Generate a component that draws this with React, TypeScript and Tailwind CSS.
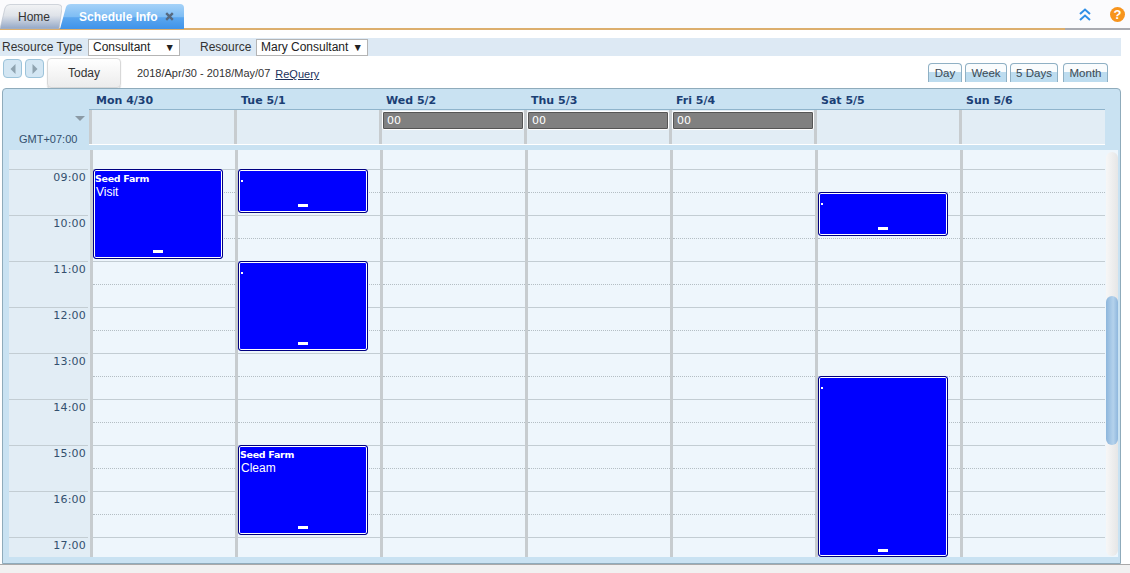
import React from "react";

const arial = "font-['Liberation_Sans',Arial,sans-serif]";
const deja = "font-['DejaVu_Sans',Verdana,sans-serif]";

const days = ["Mon 4/30", "Tue 5/1", "Wed 5/2", "Thu 5/3", "Fri 5/4", "Sat 5/5", "Sun 5/6"];
const hours = ["09:00", "10:00", "11:00", "12:00", "13:00", "14:00", "15:00", "16:00", "17:00"];

type Ev = { top: number; h: number; title?: string; body?: string; handle?: number };
const events: Record<number, Ev[]> = {
  0: [{ top: 19, h: 90, title: "Seed Farm", body: "Visit" }],
  1: [
    { top: 19, h: 44 },
    { top: 111, h: 90 },
    { top: 295, h: 90, title: "Seed Farm", body: "Cleam" },
  ],
  5: [
    { top: 42, h: 44 },
    { top: 226, h: 181, handle: 5 },
  ],
};

function Event({ e }: { e: Ev }) {
  return (
    <div
      className="absolute left-0 w-[130px] rounded-[3px] border border-[#000080] bg-[#0000ff] shadow-[inset_0_0_0_1px_#ffffff]"
      style={{ top: e.top, height: e.h }}
    >
      {e.title ? (
        <div className="pl-[1px] pt-[2px] text-white">
          <div className={`${deja} text-[9.5px] font-bold leading-[13px] tracking-[-0.3px]`}>{e.title}</div>
          <div className={`${arial} pl-[1px] pt-[1px] text-[12px] leading-[13px]`}>{e.body}</div>
        </div>
      ) : (
        <div className="ml-[2px] mt-[10px] h-[2px] w-[2px] bg-white" />
      )}
      <div
        className="absolute left-1/2 h-[3px] w-[10px] -translate-x-1/2 bg-white"
        style={{ bottom: (e.handle ?? 6) - 1 }}
      />
    </div>
  );
}

function Slots() {
  return (
    <>
      <div className="h-[20px] border-b border-[#c3cdd3]" />
      {hours.map((h) => (
        <div key={h} className="h-[46px]">
          <div className="h-[23px] border-b border-dotted border-[#b4bec4]" />
          <div className="h-[23px] border-b border-[#c3cdd3]" />
        </div>
      ))}
    </>
  );
}

function ViewTab({ label, w }: { label: string; w: string }) {
  return (
    <div
      className={`${w} ${arial} h-[19px] rounded-t-[4px] border border-b-0 border-[#8fb0c4] bg-[linear-gradient(#fafcfd_0_8px,#bddcef_8px)] text-center text-[11.5px] leading-[19px] text-[#3c4a54]`}
    >
      {label}
    </div>
  );
}

function Select({ w, label }: { w: string; label: string }) {
  return (
    <div className={`${w} flex h-[17px] items-center justify-between border border-[#b4b4b4] bg-white pl-[4px] pr-[4px] text-[12px] leading-[15px] text-[#222]`}>
      <span>{label}</span>
      <span className="text-[10.5px]">▼</span>
    </div>
  );
}

function NavBtn({ dir }: { dir: "l" | "r" }) {
  return (
    <div className="flex h-[19px] w-[19px] items-center justify-center rounded-[4px] border border-[#9cc3da] bg-[#d3e6f3]">
      <svg width="6" height="10" viewBox="0 0 6 10">
        <path d={dir === "l" ? "M5.5 0V10L0.5 5Z" : "M0.5 0V10L5.5 5Z"} fill="#8fa3b0" />
      </svg>
    </div>
  );
}

export default function App() {
  return (
    <div className={`${arial} flex h-[573px] w-[1130px] flex-col overflow-hidden bg-white`}>
      {/* top tab bar */}
      <div className="flex h-[28px] shrink-0 items-end justify-between bg-[#fbfbfd]">
        <div className="relative z-10 -mb-[1px] flex h-[25px] items-stretch">
          <div className="relative z-0 flex w-[62px] items-center pl-[18px] text-[12px] text-[#333]">
            <svg className="absolute inset-0 -z-10" width="62" height="25" viewBox="0 0 62 25">
              <defs>
                <linearGradient id="h" x1="0" x2="0" y1="0" y2="1">
                  <stop offset="0" stopColor="#f2f3f5" />
                  <stop offset="0.45" stopColor="#dfe3e9" />
                  <stop offset="1" stopColor="#92a6c6" />
                </linearGradient>
              </defs>
              <path d="M0 25 L5 4 Q6 0.5 10 0.5 H58 Q62 0.5 62 4 L59 25Z" fill="url(#h)" stroke="#b5bcc6" strokeWidth="0.6" />
            </svg>
            Home
          </div>
          <div className="relative z-0 -ml-[2px] flex w-[124px] items-center pl-[19px] text-[12px] font-bold text-white">
            <svg className="absolute inset-0 -z-10" width="124" height="25" viewBox="0 0 124 25">
              <defs>
                <linearGradient id="s" x1="0" x2="0" y1="0" y2="1">
                  <stop offset="0" stopColor="#a5d2f8" />
                  <stop offset="0.5" stopColor="#7fbdf4" />
                  <stop offset="0.55" stopColor="#5aa6ef" />
                  <stop offset="1" stopColor="#3f93ea" />
                </linearGradient>
              </defs>
              <path d="M0 25 L6 3 Q7 0 11 0 H120 Q124 0 124 4 V25Z" fill="url(#s)" />
            </svg>
            <span>Schedule Info</span>
            <svg className="ml-[7px]" width="9" height="9" viewBox="0 0 9 9">
              <path d="M1.2 1.2 7.8 7.8M7.8 1.2 1.2 7.8" stroke="#56697f" strokeWidth="2.4" />
            </svg>
          </div>
        </div>
        <div className="flex h-[28px] items-center gap-[19px] pr-[5px]">
          <svg width="12" height="13" viewBox="0 0 12 13" fill="none" stroke="#2f8fe6" strokeWidth="2">
            <path d="M1 6 6 1.5 11 6M1 12 6 7.5 11 12" />
          </svg>
          <div className="flex h-[15px] w-[15px] items-center justify-center rounded-full bg-[#f7941d] text-[13px] font-bold leading-none text-white">
            ?
          </div>
        </div>
      </div>
      <div className="h-[2px] shrink-0 bg-[linear-gradient(90deg,#dcae6d_1065px,#a9aab0_1065px)]" />

      {/* filter bar */}
      <div className="mt-[8px] flex h-[18px] w-[1121px] shrink-0 items-center bg-[#dde9f4] pl-[2px] text-[12px] text-[#333]">
        <span className="w-[86px]">Resource Type</span>
        <Select w="w-[92px]" label="Consultant" />
        <span className="ml-[20px] w-[56px]">Resource</span>
        <Select w="w-[112px]" label="Mary Consultant" />
      </div>

      {/* nav row */}
      <div className="flex h-[32px] shrink-0 pl-[3px] pt-[2px]">
        <div className="flex gap-[3px] pt-[1px]">
          <NavBtn dir="l" />
          <NavBtn dir="r" />
        </div>
        <div className="ml-[3px] flex h-[30px] w-[74px] items-center justify-center rounded-[4px] border border-[#d8d8d8] bg-[linear-gradient(#ffffff,#ececec)] text-[12px] text-[#333] shadow-[0_1px_1px_#ccc]">
          Today
        </div>
        <div className="ml-[16px] mt-[7px] text-[11px] leading-[16px] text-[#333]">2018/Apr/30 - 2018/May/07</div>
        <div className="ml-[5px] mt-[8px] text-[11px] leading-[16px] text-[#1a2f5a] underline">ReQuery</div>
        <div className="ml-auto mr-[22px] mt-[5px] flex gap-[3px]">
          <ViewTab label="Day" w="w-[34px]" />
          <ViewTab label="Week" w="w-[42px]" />
          <ViewTab label="5 Days" w="w-[48px]" />
          <div className="ml-[2px]">
            <ViewTab label="Month" w="w-[45px]" />
          </div>
        </div>
      </div>

      {/* calendar panel */}
      <div className="ml-[2px] flex h-[476px] w-[1119px] shrink-0 flex-col rounded-t-[4px] border border-[#8fabbb] bg-[#c9e2f2]">
        {/* header */}
        <div className="flex h-[56px] shrink-0">
          <div className={`${arial} relative w-[86px] shrink-0`}>
            <svg className="absolute left-[72px] top-[27px]" width="10" height="5" viewBox="0 0 10 5">
              <path d="M0 0H10L5 5Z" fill="#8b9aa5" />
            </svg>
            <div className="absolute bottom-[-1px] left-[16px] text-[11px] leading-[13px] text-[#33506e]">GMT+07:00</div>
          </div>
          <div className="w-[1016px] shrink-0">
            <div className="flex h-[21px] border-b border-[#8fb4cc]">
              {days.map((d, i) => (
                <div key={d} className={`${deja} ${i === 6 ? "w-[146px]" : "w-[145px]"} pl-[7px] text-[11px] font-bold leading-[24px] text-[#1b3f75]`}>
                  {d}
                </div>
              ))}
            </div>
            <div className="flex h-[35px] border-b border-white bg-[#e2edf5]">
              {days.map((d, i) => (
                <div key={d} className={`${i === 6 ? "w-[146px]" : "w-[145px]"} border-l-[3px] border-[#c7cccf] pt-[1px]`}>
                  {i >= 2 && i <= 4 ? (
                    <div className={`${deja} h-[19px] rounded-[2px] border border-white bg-[#808080] pl-[4px] text-[11px] leading-[17px] text-white shadow-[inset_0_0_0_1px_#555]`}>
                      00
                    </div>
                  ) : null}
                </div>
              ))}
            </div>
          </div>
        </div>

        {/* body */}
        <div className="ml-[6px] mt-[5px] flex h-[407px] w-[1109px] shrink-0 overflow-hidden bg-[#eef6fc]">
          <div className="w-[81px] shrink-0 bg-[#e2edf5]">
            <div className="mr-[2px] h-[20px] border-b border-[#c3cdd3]" />
            {hours.map((h) => (
              <div key={h} className={`${deja} mr-[2px] h-[46px] border-b border-[#c3cdd3] pr-[2px] pt-[1px] text-right text-[11px] leading-[13px] tracking-[0.2px] text-[#33506e]`}>
                {h}
              </div>
            ))}
          </div>
          {days.map((d, i) => (
            <div key={d} className="relative w-[145px] shrink-0 border-l-[3px] border-[#c7cccf]">
              <Slots />
              {(events[i] ?? []).map((e, k) => (
                <Event key={k} e={e} />
              ))}
            </div>
          ))}
          <div className="ml-[1px] w-[12px] shrink-0 pt-[2px]">
            <div className="h-[404px] rounded-[6px] bg-[linear-gradient(90deg,#f7f7f7,#e6e6e6)] pt-[144px]">
              <div className="h-[149px] rounded-[6px] bg-[linear-gradient(90deg,#8db6dc,#b4d2ec_60%,#8fb7dd)]" />
            </div>
          </div>
        </div>
      </div>

      <div className="flex-1 border-t border-[#a9a9a9] bg-[#f1f1f1]" />
    </div>
  );
}
